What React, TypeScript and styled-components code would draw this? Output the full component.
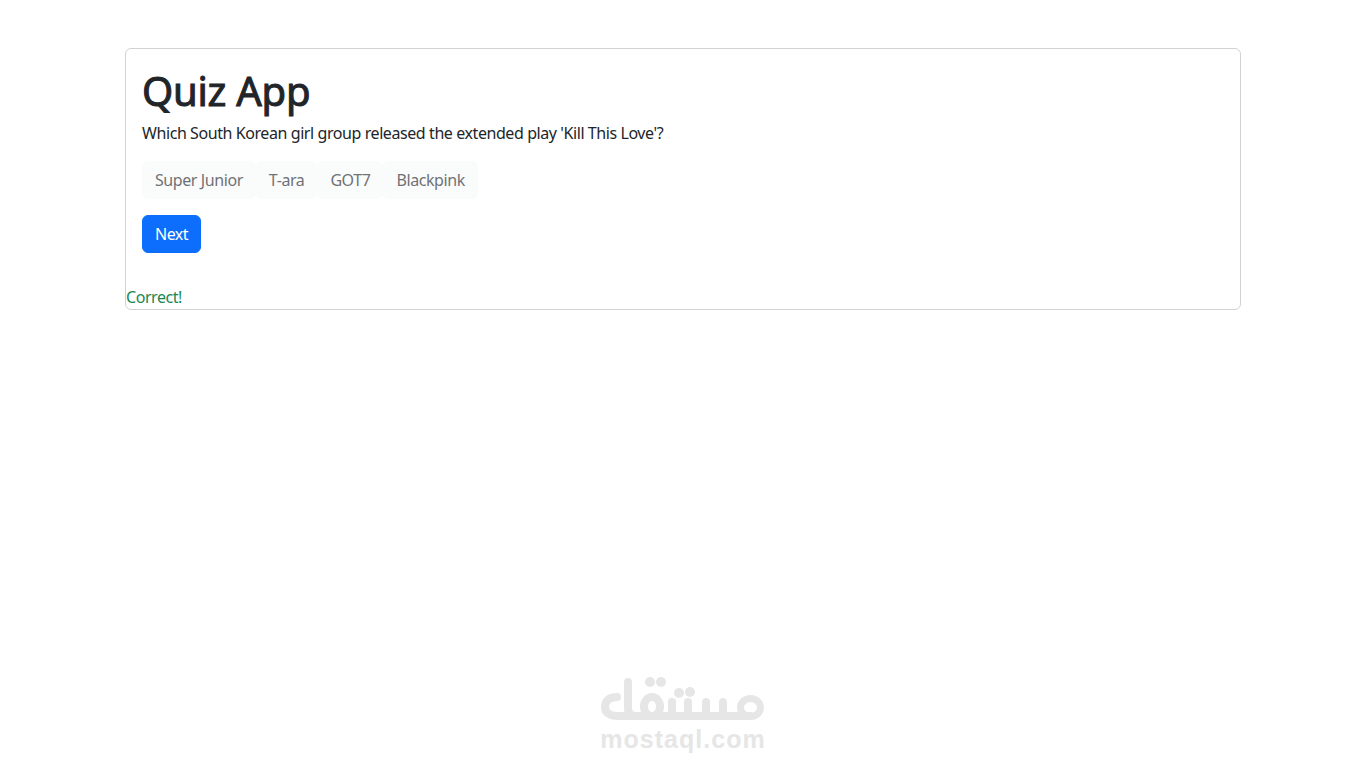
import React from "react";
import styled, { createGlobalStyle } from "styled-components";

const Global = createGlobalStyle`
  html, body { margin: 0; padding: 0; background: #fff; }
  body {
    font-family: "Noto Sans", "Open Sans", "Liberation Sans", sans-serif;
    font-size: 16px;
    line-height: 24px;
    color: #212529;
  }
`;

const Page = styled.div`
  height: 768px;
  overflow: hidden;
  display: flex;
  flex-direction: column;
  align-items: center;
  padding-top: 48px;
  box-sizing: border-box;
`;

const Card = styled.section`
  width: 1116px;
  box-sizing: border-box;
  border: 1px solid rgba(0, 0, 0, 0.175);
  border-radius: 6px;
`;

const Body = styled.div`
  padding: 16px;
  margin-bottom: 16px;
`;

const Title = styled.h1`
  margin: 0 0 8px;
  height: 48px;
  box-sizing: border-box;
  padding-top: 2px;
  font-size: 40px;
  line-height: 48px;
  font-weight: 400;
  -webkit-text-stroke: 1px #212529;
  letter-spacing: -0.25px;
`;

const Question = styled.p`
  margin: 0 0 16px;
  letter-spacing: -0.42px;
`;

const Options = styled.div`
  display: flex;
  margin-bottom: 16px;
`;

const Option = styled.button`
  height: 38px;
  box-sizing: border-box;
  border: 1px solid #f8f9fa;
  border-radius: 6px;
  background: #f8f9fa;
  color: #212529;
  opacity: 0.65;
  font: inherit;
  letter-spacing: -0.42px;
  padding: 0 12px;
`;

const Next = styled.button`
  display: block;
  height: 38px;
  box-sizing: border-box;
  border: 1px solid #0d6efd;
  border-radius: 6px;
  background: #0d6efd;
  color: #fff;
  font: inherit;
  letter-spacing: -0.5px;
  padding: 0 12px;
`;

const Feedback = styled.div`
  color: #198754;
  letter-spacing: -0.45px;
`;

const Watermark = styled.div`
  margin-top: auto;
  margin-bottom: 16px;
  display: flex;
  flex-direction: column;
  align-items: center;
`;

const WatermarkText = styled.div`
  font-family: "Liberation Sans", Arial, sans-serif;
  font-weight: 700;
  font-size: 25px;
  line-height: 26px;
  color: #e6e6e6;
  letter-spacing: 1.05px;
`;

const Logo = () => (
  <svg width="166" height="50" viewBox="0 0 166 50" fill="none" stroke="#e6e6e6" strokeWidth="8" strokeLinecap="round" strokeLinejoin="round">
    <path d="M28 6 V32 Q28 40 36 40 H150" />
    <path d="M17 21 C9 21 5 25 5 31 C5 37 10 40 18 40 H40" />
    <ellipse cx="52" cy="30.5" rx="8" ry="9.5" />
    <path d="M72 26 V40 M88 26 V40 M106 26 V40 M123 26 V40" />
    <ellipse cx="150.5" cy="31.5" rx="10" ry="9" strokeWidth="7" />
    <g fill="#e6e6e6" stroke="none">
      <circle cx="50" cy="6" r="5" />
      <circle cx="61" cy="6" r="5" />
      <circle cx="79" cy="17" r="5" />
      <circle cx="90" cy="16" r="5" />
    </g>
  </svg>
);

export default function App() {
  return (
    <>
      <Global />
      <Page>
        <Card>
          <Body>
            <Title>Quiz App</Title>
            <Question>Which South Korean girl group released the extended play 'Kill This Love'?</Question>
            <Options>
              {["Super Junior", "T-ara", "GOT7", "Blackpink"].map((o) => (
                <Option key={o}>{o}</Option>
              ))}
            </Options>
            <Next>Next</Next>
          </Body>
          <Feedback>Correct!</Feedback>
        </Card>
        <Watermark>
          <Logo />
          <WatermarkText>mostaql.com</WatermarkText>
        </Watermark>
      </Page>
    </>
  );
}
